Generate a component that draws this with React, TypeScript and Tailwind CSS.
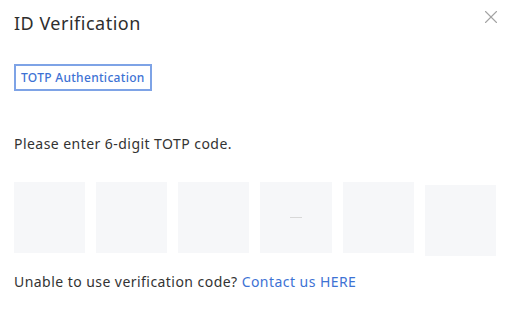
import { X } from "lucide-react"

export default function App() {
  const digits = ["", "", "", "", "", ""]

  return (
    <div
      className="relative h-[314px] w-[514px] bg-white px-[14px] pt-[10px] text-[#333]"
      style={{ fontFamily: '"Noto Sans", "Open Sans", sans-serif' }}
    >
      <button className="absolute right-[12px] top-[6px] text-[#a3a3a3]">
        <X className="h-[22px] w-[22px]" strokeWidth={1.2} />
      </button>

      <h2 className="text-[18px] leading-[26px] tracking-[0.5px] text-[#2e2e2e]">ID Verification</h2>

      <div className="mt-[28px]">
        <button className="h-[27px] border-2 border-[#7ea3e6] px-[5px] text-[12px] font-medium leading-[23px] tracking-[0.3px] text-[#3d72d4]">
          TOTP Authentication
        </button>
      </div>

      <p className="mt-[44px] text-[14px] leading-[18px] tracking-[0.45px] text-[#333]">
        Please enter 6-digit TOTP code.
      </p>

      <div className="mt-[29px] grid w-[482px] grid-cols-6 gap-[11px]">
        {digits.map((d, i) => (
          <div
            key={i}
            className={`flex h-[71px] items-center justify-center bg-[#f6f7f9] ${
              i === 5 ? "mt-[3px]" : ""
            }`}
          >
            {i === 3 ? <span className="h-px w-[12px] bg-[#d8d8d8]" /> : d}
          </div>
        ))}
      </div>

      <p className="mt-[17px] text-[14px] leading-[18px] tracking-[0.45px] text-[#333]">
        Unable to use verification code?{" "}
        <a className="cursor-pointer text-[#3d72d4]">Contact us HERE</a>
      </p>
    </div>
  )
}
